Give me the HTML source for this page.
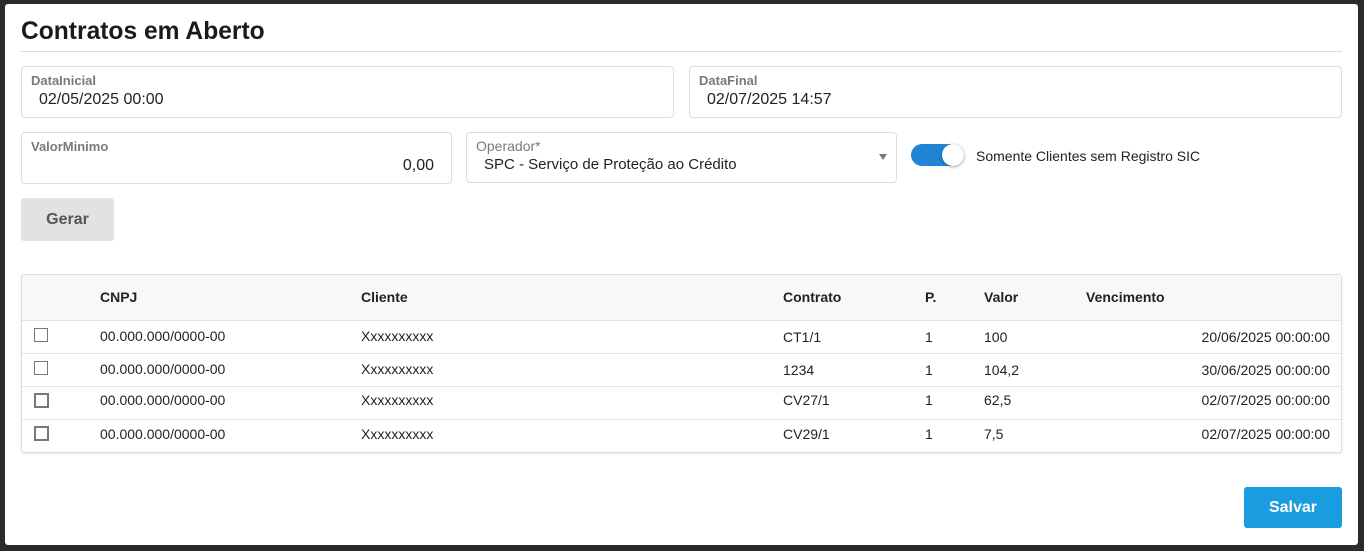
<!DOCTYPE html>
<html><head><meta charset="utf-8"><style>
*{box-sizing:border-box;margin:0;padding:0}
body{width:1364px;height:551px;background:#2b2b2b;font-family:"Liberation Sans",sans-serif;color:#222;position:relative;overflow:hidden}
.card{position:absolute;left:5px;top:4px;width:1353px;height:541px;background:#fff;border-radius:3px}
.a{position:absolute}
h1{position:absolute;left:16px;top:14px;font-size:24.6px;font-weight:bold;color:#1a1a1a}
.hr{position:absolute;left:16px;top:47px;width:1321px;height:1px;background:#ddd}
.f{position:absolute;border:1px solid #ddd;border-radius:4px}
.lb{position:absolute;left:9px;top:6px;font-size:13px;font-weight:bold;color:#7a7a7a}
.v{position:absolute;font-size:16px;color:#222}
.btn{position:absolute;left:16px;top:194px;width:93px;height:43px;background:#e1e2e4;border-radius:3px;font-size:16px;font-weight:bold;color:#555;text-align:center;line-height:43px}
.tbl{position:absolute;left:16px;top:270px;width:1321px;height:179px;border:1px solid #ddd;border-radius:3px;overflow:hidden;box-shadow:0 1px 2px rgba(0,0,0,.1)}
.th{position:absolute;left:0;top:0;width:100%;height:46px;background:#f7f8fa;border-bottom:1px solid #e3e3e3}
.row{position:absolute;left:0;width:100%;height:33px;border-bottom:1px solid #e6e6e6}
.t{position:absolute;font-size:14px;top:7px}
.hd{position:absolute;font-size:14px;font-weight:bold;top:14px;color:#222}
.cb{position:absolute;left:12px;top:7px;width:14px;height:14px;border:1px solid #777;background:#fff}
.cb2{border:2px solid #777;width:15px;height:15px}
.r2 .t{top:5px}.r2 .cb{top:6px}
</style></head><body><div class="card">
<h1>Contratos em Aberto</h1>
<div class="hr"></div>
<div class="f" style="left:16px;top:62px;width:653px;height:52px"><div class="lb">DataInicial</div><div class="v" style="left:17px;top:24px">02/05/2025 00:00</div></div>
<div class="f" style="left:684px;top:62px;width:653px;height:52px"><div class="lb">DataFinal</div><div class="v" style="left:17px;top:24px">02/07/2025 14:57</div></div>
<div class="f" style="left:16px;top:128px;width:431px;height:52px"><div class="lb">ValorMinimo</div><div class="v" style="right:17px;top:24px">0,00</div></div>
<div class="f" style="left:461px;top:128px;width:431px;height:51px"><div class="lb" style="font-weight:normal;font-size:14px;top:5px">Operador*</div><div class="v" style="left:17px;top:23px;font-size:15px">SPC - Serviço de Proteção ao Crédito</div><div class="a" style="right:9px;top:21px;width:0;height:0;border-left:4px solid transparent;border-right:4px solid transparent;border-top:6px solid #777"></div></div>
<div class="a" style="left:906px;top:140px;width:53px;height:22px;background:#2184d4;border-radius:11px"></div>
<div class="a" style="left:937px;top:140px;width:22px;height:22px;background:#fff;border-radius:50%;box-shadow:0 1px 3px rgba(0,0,0,.35)"></div>
<div class="a" style="left:971px;top:144px;font-size:14px">Somente Clientes sem Registro SIC</div>
<div class="btn">Gerar</div>
<div class="tbl">
<div class="th"><div class="hd" style="left:78px">CNPJ</div><div class="hd" style="left:339px">Cliente</div><div class="hd" style="left:761px">Contrato</div><div class="hd" style="left:903px">P.</div><div class="hd" style="left:962px">Valor</div><div class="hd" style="left:1064px">Vencimento</div></div>
<div class="row" style="top:46px"><div class="cb"></div><div class="t" style="left:78px">00.000.000/0000-00</div><div class="t" style="left:339px">Xxxxxxxxxx</div><div class="t" style="left:761px;top:8px">CT1/1</div><div class="t" style="left:903px;top:8px">1</div><div class="t" style="left:962px;top:8px">100</div><div class="t" style="right:11px;top:8px">20/06/2025 00:00:00</div></div>
<div class="row" style="top:79px"><div class="cb"></div><div class="t" style="left:78px">00.000.000/0000-00</div><div class="t" style="left:339px">Xxxxxxxxxx</div><div class="t" style="left:761px;top:8px">1234</div><div class="t" style="left:903px;top:8px">1</div><div class="t" style="left:962px;top:8px">104,2</div><div class="t" style="right:11px;top:8px">30/06/2025 00:00:00</div></div>
<div class="row r2" style="top:112px"><div class="cb cb2"></div><div class="t" style="left:78px">00.000.000/0000-00</div><div class="t" style="left:339px">Xxxxxxxxxx</div><div class="t" style="left:761px">CV27/1</div><div class="t" style="left:903px">1</div><div class="t" style="left:962px">62,5</div><div class="t" style="right:11px">02/07/2025 00:00:00</div></div>
<div class="row r2" style="top:145px;border-bottom:none"><div class="cb cb2"></div><div class="t" style="left:78px;top:6px">00.000.000/0000-00</div><div class="t" style="left:339px;top:6px">Xxxxxxxxxx</div><div class="t" style="left:761px;top:6px">CV29/1</div><div class="t" style="left:903px;top:6px">1</div><div class="t" style="left:962px;top:6px">7,5</div><div class="t" style="right:11px;top:6px">02/07/2025 00:00:00</div></div>
</div>
<div class="a" style="left:1239px;top:483px;width:98px;height:41px;background:#1a9de0;border-radius:3px;color:#fff;font-weight:bold;font-size:16px;text-align:center;line-height:41px">Salvar</div>
</div></body></html>
